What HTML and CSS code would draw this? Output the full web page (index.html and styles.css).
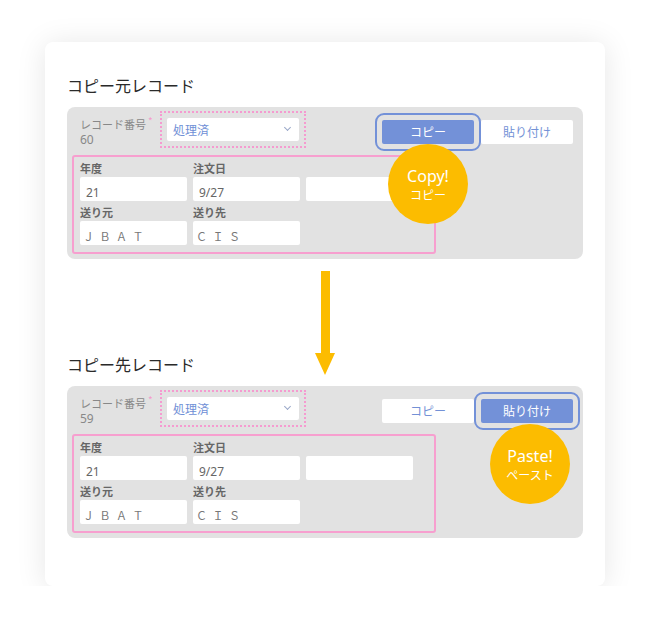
FILE: index.html
```html
<!DOCTYPE html>
<html lang="ja">
<head>
    <meta charset="UTF-8">
    <title>コピー＆ペースト</title>
    <link rel="stylesheet" href="styles.css">
</head>
<body>
    <div class="card">
        <div class="section">
            <h2 class="title">コピー元レコード</h2>
            <div class="panel">
                <div class="head">
                    <div class="rec">
                        <div class="rec-label">レコード番号<span class="req">*</span></div>
                        <div class="rec-num">60</div>
                    </div>
                    <div class="status">
                        <div class="select">処理済<span class="chev"></span></div>
                    </div>
                    <div class="actions">
                        <button class="btn btn-on">コピー</button>
                        <button class="btn">貼り付け</button>
                    </div>
                </div>
                <div class="fields">
                    <div class="lbl">年度</div>
                    <div class="lbl">注文日</div>
                    <div class="lbl"></div>
                    <div class="val">21</div>
                    <div class="val">9/27</div>
                    <div class="val"></div>
                    <div class="lbl">送り元</div>
                    <div class="lbl">送り先</div>
                    <div class="lbl"></div>
                    <div class="val wide">ＪＢＡＴ</div>
                    <div class="val wide">ＣＩＳ</div>
                </div>
                <div class="badge badge-copy">
                    <span class="badge-en">Copy!</span>
                    <span class="badge-ja">コピー</span>
                </div>
            </div>
        </div>

        <div class="gap">
            <svg class="arrow" width="20" height="104" viewBox="0 0 20 104">
                <rect x="6" y="0" width="9" height="83" fill="#fcbc00"/>
                <polygon points="0,82 20,82 10,104" fill="#fcbc00"/>
            </svg>
        </div>

        <div class="section">
            <h2 class="title">コピー先レコード</h2>
            <div class="panel">
                <div class="head">
                    <div class="rec">
                        <div class="rec-label">レコード番号<span class="req">*</span></div>
                        <div class="rec-num">59</div>
                    </div>
                    <div class="status">
                        <div class="select">処理済<span class="chev"></span></div>
                    </div>
                    <div class="actions">
                        <button class="btn">コピー</button>
                        <button class="btn btn-on">貼り付け</button>
                    </div>
                </div>
                <div class="fields">
                    <div class="lbl">年度</div>
                    <div class="lbl">注文日</div>
                    <div class="lbl"></div>
                    <div class="val">21</div>
                    <div class="val">9/27</div>
                    <div class="val"></div>
                    <div class="lbl">送り元</div>
                    <div class="lbl">送り先</div>
                    <div class="lbl"></div>
                    <div class="val wide">ＪＢＡＴ</div>
                    <div class="val wide">ＣＩＳ</div>
                </div>
                <div class="badge badge-paste">
                    <span class="badge-en">Paste!</span>
                    <span class="badge-ja">ペースト</span>
                </div>
            </div>
        </div>
    </div>
</body>
</html>
```

FILE: styles.css
```css
body {
    margin: 0;
    background: #fff;
    font-family: "Noto Sans", "Noto Sans CJK JP", sans-serif;
    color: #333;
}
.card {
    width: 560px;
    height: 544px;
    box-sizing: border-box;
    margin: 42px 0 0 45px;
    padding: 31px 22px 0;
    background: #fff;
    border-radius: 8px;
    box-shadow: 0 2px 30px rgba(0, 0, 0, 0.1);
}
.title {
    margin: 0 0 10px;
    font-family: "Noto Sans CJK JP", sans-serif;
    font-size: 16px;
    line-height: 24px;
    font-weight: 400;
    color: #2a2a2a;
}
.panel {
    position: relative;
    height: 152px;
    box-sizing: border-box;
    padding: 4px 10px 5px 5px;
    background: #e2e2e2;
    border-radius: 8px;
}
.head {
    display: flex;
    align-items: center;
    height: 37px;
    padding-left: 8px;
}
.rec {
    width: 80px;
    font-family: "Noto Sans CJK JP", sans-serif;
    font-size: 11px;
    color: #888;
    padding-top: 4px;
}
.rec-label {
    height: 16px;
    line-height: 16px;
}
.rec-num {
    height: 15px;
    font-family: "Noto Sans", sans-serif;
    font-size: 12px;
    line-height: 15px;
}
.req {
    color: #f49bcc;
    font-size: 10px;
    vertical-align: top;
    margin-left: 2px;
    line-height: 0;
    position: relative;
    top: 5px;
}
.status {
    border: 2px dotted #f59bd0;
    padding: 5px;
}
.select {
    position: relative;
    width: 132px;
    height: 23px;
    box-sizing: border-box;
    padding-left: 6px;
    background: #fff;
    border-radius: 2px;
    color: #6f8fd6;
    font-family: "Noto Sans CJK JP", sans-serif;
    font-size: 12px;
    line-height: 23px;
}
.chev {
    position: absolute;
    right: 9px;
    top: 7px;
    width: 4px;
    height: 4px;
    border-right: 1px solid #9aa8c8;
    border-bottom: 1px solid #9aa8c8;
    transform: rotate(45deg);
}
.actions {
    display: flex;
    gap: 7px;
    margin-left: auto;
    padding-top: 4px;
}
.btn {
    width: 92px;
    height: 24px;
    border: none;
    border-radius: 2px;
    background: #fff;
    color: #7391d6;
    font-family: "Noto Sans CJK JP", sans-serif;
    font-size: 12px;
    padding: 0;
}
.btn-on {
    background: #7391d8;
    color: #fff;
    outline: 2px solid #7391d8;
    outline-offset: 5px;
}
.fields {
    display: grid;
    grid-template-columns: 107px 107px 107px;
    column-gap: 6px;
    width: 364px;
    height: 99px;
    box-sizing: border-box;
    margin-top: 7px;
    padding: 0 6px 7px;
    border: 2px solid #f79fcf;
    border-radius: 3px;
}
.lbl {
    height: 20px;
    font-family: "Noto Sans CJK JP", sans-serif;
    font-size: 11px;
    font-weight: 700;
    line-height: 20px;
    color: #666;
    padding-top: 1px;
    box-sizing: border-box;
}
.val {
    height: 24px;
    box-sizing: border-box;
    padding: 8px 6px 0;
    background: #fff;
    border-radius: 2px;
    font-size: 12px;
    line-height: 15px;
    color: #666;
}
.wide {
    padding-left: 3px;
    font-family: "Noto Sans CJK JP", sans-serif;
    font-size: 11px;
    letter-spacing: 5.5px;
    color: #777;
}
.gap {
    height: 93px;
    box-sizing: border-box;
    padding: 12px 0 0 248px;
}
.arrow {
    display: block;
    overflow: visible;
}
.badge {
    position: absolute;
    width: 80px;
    height: 80px;
    border-radius: 50%;
    background: #fcbc00;
    color: #fff;
    display: flex;
    flex-direction: column;
    align-items: center;
    justify-content: center;
}
.badge-copy {
    left: 321px;
    top: 37px;
}
.badge-paste {
    left: 423px;
    top: 38px;
}
.badge-en {
    font-size: 16px;
    line-height: 20px;
    margin-bottom: 1px;
}
.badge-ja {
    font-family: "Noto Sans CJK JP", sans-serif;
    font-size: 12px;
    line-height: 16px;
}
```
